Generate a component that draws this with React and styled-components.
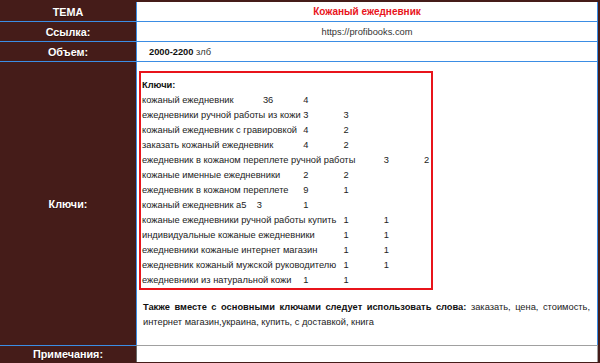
import React from 'react';
import styled, { createGlobalStyle } from 'styled-components';

const GlobalStyle = createGlobalStyle`
  html, body {
    margin: 0;
    padding: 0;
    background: #451c19;
  }
  body {
    font-family: "Liberation Sans", Arial, sans-serif;
  }
`;

const BLUE = '#3b8de4';

const Sheet = styled.div`
  width: 600px;
  box-sizing: border-box;
  padding: 2px 2px 2px 0;
  background: #451c19;
`;

const Row = styled.div`
  display: grid;
  grid-template-columns: 136px 1fr;
  min-height: ${(p) => p.$h || 19}px;
  border-bottom: ${(p) => (p.$last ? 'none' : `1px solid ${BLUE}`)};
`;

const Label = styled.div`
  display: flex;
  align-items: center;
  justify-content: center;
  color: #fff;
  font-weight: bold;
  font-size: 10.8px;
  text-shadow: 0 1px 0 rgba(0, 0, 0, 0.35);
`;

const Value = styled.div`
  display: flex;
  align-items: center;
  justify-content: ${(p) => p.$align || 'center'};
  padding-left: ${(p) => p.$pl || 0}px;
  background: #fff;
  border-left: 1px solid ${BLUE};
  border-right: 1px solid ${BLUE};
  font-size: 9.3px;
  color: #333;
`;

const Title = styled.span`
  color: #e8141b;
  font-weight: bold;
  font-size: 10px;
`;

const Strong = styled.b`
  color: #111;
`;

const KeysCell = styled.div`
  background: #fff;
  border-left: 1px solid ${BLUE};
  border-right: 1px solid ${BLUE};
  padding: 9px 0 15px 2px;
`;

const KeyBox = styled.div`
  width: 294px;
  box-sizing: border-box;
  border: 2px solid #e8141b;
  padding: 5px 2px 0 1px;
  font-size: 9.3px;
  line-height: 15px;
  color: #222;
  white-space: pre;
  tab-size: 40.3px;
`;

const KeyHead = styled.div`
  font-weight: bold;
  color: #111;
`;

const KeyLine = styled.div``;

const Note = styled.p`
  margin: 10px 0 0;
  padding: 0 7px 0 4px;
  font-size: 9.3px;
  line-height: 15px;
  text-align: justify;
  color: #222;
`;

const NotesValue = styled.div`
  margin-top: -1px;
  background: #fff;
  border-top: 1px solid #a0a0a0;
  border-left: 1px solid #6a6a6a;
  border-right: 1px solid #a0a0a0;
`;

const keys = [
  'кожаный ежедневник\t36\t4',
  'ежедневники ручной работы из кожи\t3\t3',
  'кожаный ежедневник с гравировкой\t4\t2',
  'заказать кожаный ежедневник\t4\t2',
  'ежедневник в кожаном переплете ручной работы\t3\t2',
  'кожаные именные ежедневники\t2\t2',
  'ежедневник в кожаном переплете\t9\t1',
  'кожаный ежедневник а5    3\t1',
  'кожаные ежедневники ручной работы купить\t1\t1',
  'индивидуальные кожаные ежедневники\t1\t1',
  'ежедневники кожаные интернет магазин\t1\t1',
  'ежедневник кожаный мужской руководителю\t1\t1',
  'ежедневники из натуральной кожи\t1\t1',
];

export default function App() {
  return (
    <>
      <GlobalStyle />
      <Sheet>
        <Row>
          <Label>ТЕМА</Label>
          <Value>
            <Title>Кожаный ежедневник</Title>
          </Value>
        </Row>
        <Row>
          <Label>Ссылка:</Label>
          <Value>https://profibooks.com</Value>
        </Row>
        <Row>
          <Label>Объем:</Label>
          <Value $align="flex-start" $pl={12}>
            <Strong>2000-2200</Strong>&nbsp;злб
          </Value>
        </Row>
        <Row>
          <Label>Ключи:</Label>
          <KeysCell>
            <KeyBox>
              <KeyHead>Ключи:</KeyHead>
              {keys.map((k) => (
                <KeyLine key={k}>{k}</KeyLine>
              ))}
            </KeyBox>
            <Note>
              <Strong>Также вместе с основными ключами следует использовать слова:</Strong>{' '}
              заказать, цена, стоимость, интернет магазин,украина, купить, с доставкой, книга
            </Note>
          </KeysCell>
        </Row>
        <Row $h={16} $last>
          <Label>Примечания:</Label>
          <NotesValue />
        </Row>
      </Sheet>
    </>
  );
}
